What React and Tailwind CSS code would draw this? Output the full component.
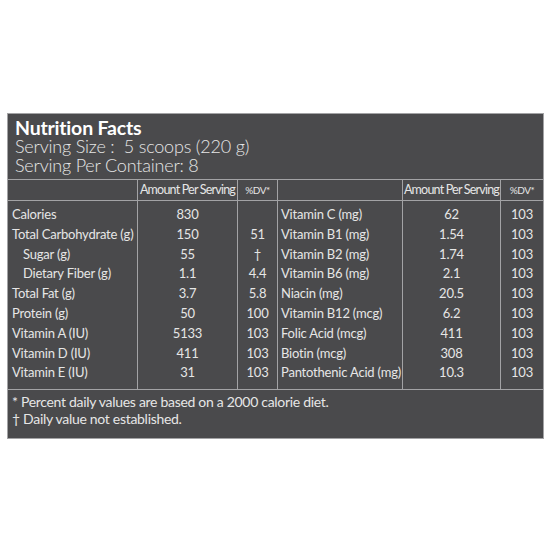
import React from "react";

const left = [
  ["Calories", "830", ""],
  ["Total Carbohydrate (g)", "150", "51"],
  ["Sugar (g)", "55", "†", true],
  ["Dietary Fiber (g)", "1.1", "4.4", true],
  ["Total Fat (g)", "3.7", "5.8"],
  ["Protein (g)", "50", "100"],
  ["Vitamin A (IU)", "5133", "103"],
  ["Vitamin D (IU)", "411", "103"],
  ["Vitamin E (IU)", "31", "103"],
];

const right = [
  ["Vitamin C (mg)", "62", "103"],
  ["Vitamin B1 (mg)", "1.54", "103"],
  ["Vitamin B2 (mg)", "1.74", "103"],
  ["Vitamin B6 (mg)", "2.1", "103"],
  ["Niacin (mg)", "20.5", "103"],
  ["Vitamin B12 (mcg)", "6.2", "103"],
  ["Folic Acid (mcg)", "411", "103"],
  ["Biotin (mcg)", "308", "103"],
  ["Pantothenic Acid (mg)", "10.3", "103"],
];

const line = "border-[#a3a3a5]";

const Col = ({ items, idx, align, first }) => (
  <div className={`flex flex-col pt-[4px] pb-[6px] ${first ? "" : `border-l ${line}`} ${align}`}>
    {items.map((r, i) => (
      <div key={i} className={`h-[19.8px] leading-[19.8px] whitespace-nowrap ${idx === 0 && r[3] ? "pl-[11px]" : ""}`}>
        {r[idx]}
      </div>
    ))}
  </div>
);

export default function App() {
  return (
    <div className="min-h-[550px] bg-white pt-[113px] pl-[7px]" style={{ fontFamily: "Lato, 'Noto Sans', sans-serif" }}>
      <div className={`w-[537px] h-[326px] bg-[#4a4a4c] border ${line} text-[#e6e6e6] flex flex-col`}>
        {/* Header */}
        <div className={`px-[7px] pt-[4px] h-[66px] border-b ${line}`}>
          <div className="text-[19.5px] font-bold text-white leading-[19px] tracking-[-0.2px]">Nutrition Facts</div>
          <div className="text-[18px] font-light leading-[19px] tracking-[-0.2px]">Serving Size :&nbsp; 5 scoops (220 g)</div>
          <div className="text-[18px] font-light leading-[18px] tracking-[-0.2px]">Serving Per Container: 8</div>
        </div>

        {/* Column heads */}
        <div className={`grid grid-cols-[129px_100px_40px_125px_98px_1fr] h-[21px] border-b ${line} text-[12.5px] leading-[20px] tracking-[-0.8px]`}>
          <div></div>
          <div className={`border-l ${line} text-center`}>Amount Per Serving</div>
          <div className={`border-l ${line} text-center text-[10px] tracking-[-0.5px]`}>%DV*</div>
          <div className={`border-l ${line}`}></div>
          <div className={`border-l ${line} text-center`}>Amount Per Serving</div>
          <div className={`border-l ${line} text-center text-[10px] tracking-[-0.5px]`}>%DV*</div>
        </div>

        {/* Body */}
        <div className={`grid grid-cols-[129px_100px_40px_125px_98px_1fr] border-b ${line} text-[13px] tracking-[-0.2px]`}>
          <Col items={left} idx={0} align="pl-[4px]" first />
          <Col items={left} idx={1} align="items-center" />
          <Col items={left} idx={2} align="items-center" />
          <Col items={right} idx={0} align="pl-[3px]" />
          <Col items={right} idx={1} align="items-center" />
          <Col items={right} idx={2} align="items-center" />
        </div>

        {/* Footer */}
        <div className="px-[4px] pt-[3px] text-[14px] leading-[17px] tracking-[-0.3px]">
          <div>* Percent daily values are based on a 2000 calorie diet.</div>
          <div>† Daily value not established.</div>
        </div>
      </div>
    </div>
  );
}
